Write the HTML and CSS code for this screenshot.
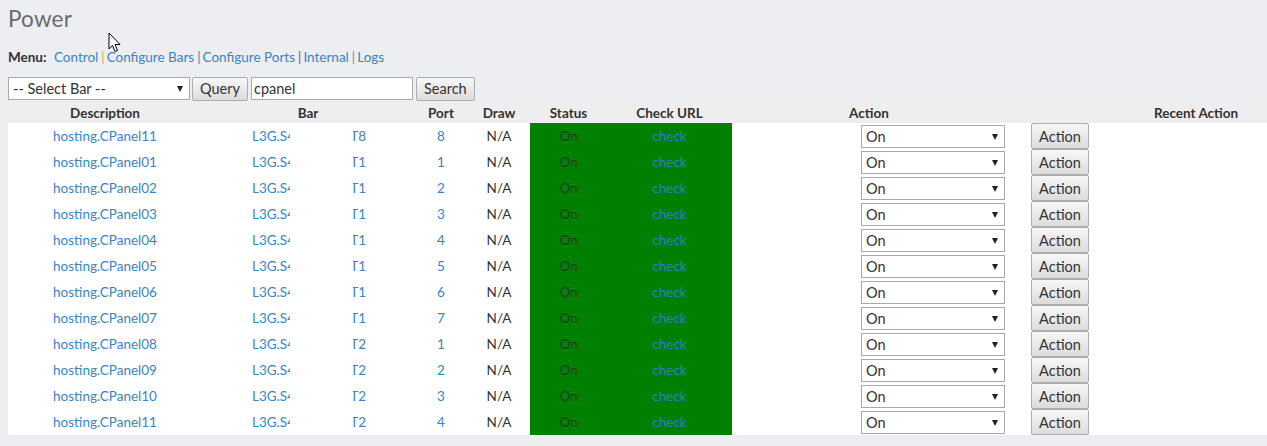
FILE: index.html
```html
<!DOCTYPE html>
<html>
<head>
<meta charset="utf-8">
<title>Power</title>
<link rel="stylesheet" href="styles.css">
</head>
<body>
<h1 class="title">Power</h1>
<div class="menu"><b>Menu:</b> <a href="#">Control</a><span class="sep s1">|</span><a href="#">Configure Bars</a><span class="sep s2">|</span><a href="#">Configure Ports</a><span class="sep s3">|</span><a href="#">Internal</a><span class="sep s4">|</span><a href="#">Logs</a></div>
<form class="controls">
  <span class="selwrap barwrap"><select class="sel barsel"><option>-- Select Bar --</option></select></span>
  <button type="button" class="btn">Query</button>
  <input class="search" type="text" value="cpanel">
  <button type="button" class="btn">Search</button>
</form>
<table class="grid">
  <thead>
    <tr>
      <th class="c-desc">Description</th>
      <th class="c-bar">Bar</th>
      <th class="c-port">Port</th>
      <th class="c-draw">Draw</th>
      <th class="c-status">Status</th>
      <th class="c-check">Check URL</th>
      <th class="c-action">Action</th>
      <th class="c-btn"></th>
      <th class="c-recent">Recent Action</th>
    </tr>
  </thead>
  <tbody id="rows"></tbody>
</table>
<svg class="cursor" width="14" height="22" viewBox="0 0 14 22"><path d="M1 1 L1 17 L4.5 13.5 L7 19.5 L9.5 18.5 L7 12.5 L12 12.5 Z" fill="#fff" stroke="#000" stroke-width="1" stroke-linejoin="miter"/></svg>
<script src="app.js"></script>
</body>
</html>
```
FILE: app.js
```js
var data = [
  ["hosting.CPanel11","T8","8"],
  ["hosting.CPanel01","T1","1"],
  ["hosting.CPanel02","T1","2"],
  ["hosting.CPanel03","T1","3"],
  ["hosting.CPanel04","T1","4"],
  ["hosting.CPanel05","T1","5"],
  ["hosting.CPanel06","T1","6"],
  ["hosting.CPanel07","T1","7"],
  ["hosting.CPanel08","T2","1"],
  ["hosting.CPanel09","T2","2"],
  ["hosting.CPanel10","T2","3"],
  ["hosting.CPanel11","T2","4"]
];
var tb = document.getElementById('rows');
var html = '';
data.forEach(function (r) {
  html += '<tr>' +
    '<td class="c-desc"><a href="#">' + r[0] + '</a></td>' +
    '<td class="c-bar"><span class="bar-name"><a href="#">L3G.S4</a></span><span class="bar-t"><a href="#">' + r[1] + '</a></span></td>' +
    '<td class="c-port"><a href="#">' + r[2] + '</a></td>' +
    '<td class="c-draw">N/A</td>' +
    '<td class="c-status on">On</td>' +
    '<td class="c-check on"><a href="#">check</a></td>' +
    '<td class="c-action"><span class="selwrap actwrap"><select class="sel actsel"><option>On</option><option>Off</option><option>Reboot</option></select></span></td>' +
    '<td class="c-btn"><button type="button" class="btn act">Action</button></td>' +
    '<td class="c-recent"></td>' +
    '</tr>';
});
tb.innerHTML = html;
```
FILE: styles.css
```css
html, body {
  margin: 0;
  padding: 0;
}
body {
  background: #eceef2;
  font-family: "Lato", "Liberation Sans", sans-serif;
  font-size: 13px;
  color: #333;
  padding: 0 0 0 8px;
  overflow: hidden;
  position: relative;
  width: 1259px;
  height: 446px;
}
a {
  color: #3c84c4;
  text-decoration: none;
}
.title {
  margin: 0;
  padding-top: 6px;
  height: 42px;
  font-size: 22.5px;
  font-weight: normal;
  color: #6a6a6a;
  line-height: 26px;
  letter-spacing: 0.2px;
}
.menu {
  height: 18px;
  line-height: 18px;
  font-size: 13.5px;
  margin-bottom: 10px;
}
.menu b {
  color: #333;
  font-size: 13.5px;
  margin-right: 4px;
}
.sep { margin: 0 2px 0 3px; }
.s1 { color: #e3a24a; }
.s2 { color: #4c7fb4; }
.s3 { color: #a8435c; }
.s4 { color: #888; }
.controls {
  display: flex;
  align-items: center;
  gap: 2px;
  margin: 0;
  height: 25px;
}
.selwrap {
  position: relative;
  display: block;
}
.selwrap::after {
  content: "";
  position: absolute;
  right: 7px;
  top: 9px;
  border-left: 3.5px solid transparent;
  border-right: 3.5px solid transparent;
  border-top: 6px solid #222;
  pointer-events: none;
}
.sel {
  display: block;
  -webkit-appearance: none;
  appearance: none;
  font-family: inherit;
  font-size: 14.5px;
  color: #333;
  border: 1px solid #a9a9a9;
  border-radius: 0;
  background: #fff;
  padding: 0 4px;
  margin: 0;
}
.barsel {
  width: 182px;
  height: 23px;
}
.btn {
  height: 24px;
  font-family: inherit;
  font-size: 14.5px;
  color: #333;
  border: 1px solid #adadad;
  border-radius: 2px;
  background: linear-gradient(#f7f7f7, #dcdcdc);
  padding: 0 7px;
  margin: 0;
}
.search {
  width: 156px;
  height: 19px;
  font-family: inherit;
  font-size: 14.5px;
  color: #333;
  border: 1px solid #a9a9a9;
  margin: 0 1px;
  padding: 1px 2px;
}
.grid {
  border-collapse: collapse;
  table-layout: fixed;
  width: 1280px;
  margin-top: 2px;
}
.grid th {
  background: #eeeeee;
  height: 20px;
  padding: 0;
  font-size: 13.5px;
  font-weight: bold;
  color: #333;
  text-align: center;
  line-height: 20px;
}
.grid td {
  background: #fff;
  height: 26px;
  padding: 0;
  text-align: center;
  font-size: 13.5px;
  line-height: 26px;
  white-space: nowrap;
  vertical-align: middle;
}
.c-desc { width: 194px; }
.c-bar { width: 212px; }
.c-port { width: 54px; }
.c-draw { width: 62px; }
.c-status { width: 77px; }
.c-check { width: 125px; }
.c-action { width: 274px; }
.c-btn { width: 108px; }
.c-recent { width: 174px; }
.grid th.c-recent { text-align: left; padding-left: 40px; }
.grid td.c-bar { text-align: left; padding-left: 50px; }
.bar-name {
  display: inline-block;
  width: 38px;
  overflow: hidden;
  vertical-align: top;
}
.bar-t {
  display: inline-block;
  margin-left: 63px;
  width: 13px;
  overflow: hidden;
  direction: rtl;
  vertical-align: top;
}
.grid td.on { background: #008000; }
.grid td.c-status.on { color: #2a3a2a; }
.grid td.c-check a { color: #2d7fc4; }
.actwrap {
  width: 144px;
  margin-left: 129px;
}
.actsel {
  width: 144px;
  height: 23px;
}
.grid td.c-btn { text-align: left; }
.btn.act {
  display: block;
  height: 26px;
  width: 58px;
  padding: 0;
  margin-left: 25px;
}
.cursor {
  position: absolute;
  left: 108px;
  top: 32px;
}
```
